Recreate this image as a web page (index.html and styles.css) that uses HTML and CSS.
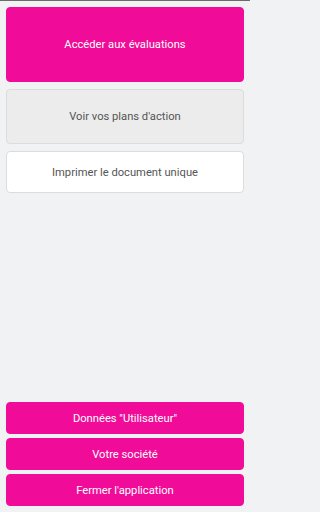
FILE: index.html
```html
<!DOCTYPE html>
<html lang="fr">
<head>
<meta charset="utf-8">
<meta name="viewport" content="width=250">
<link rel="stylesheet" href="styles.css">
</head>
<body>
<div class="app">
  <div class="top">
    <button class="btn btn-primary btn-large">Accéder aux évaluations</button>
    <button class="btn btn-gray btn-medium">Voir vos plans d'action</button>
    <button class="btn btn-white btn-small">Imprimer le document unique</button>
  </div>
  <div class="bottom">
    <button class="btn btn-primary btn-menu">Données "Utilisateur"</button>
    <button class="btn btn-primary btn-menu">Votre société</button>
    <button class="btn btn-primary btn-menu">Fermer l'application</button>
  </div>
</div>
</body>
</html>
```
FILE: styles.css
```css
html, body {
  margin: 0;
  padding: 0;
  height: 100%;
}
body {
  background: #f1f2f4;
  font-family: Roboto, "Noto Sans", sans-serif;
}
.app {
  box-sizing: border-box;
  width: 250px;
  height: 512px;
  border-top: 1px solid #6b6b6b;
  padding: 6px 6px 6px 6px;
  display: flex;
  flex-direction: column;
  justify-content: space-between;
}
.top, .bottom {
  display: flex;
  flex-direction: column;
}
.top { gap: 7px; }
.bottom { gap: 4px; }
.btn {
  box-sizing: border-box;
  width: 100%;
  border-radius: 4px;
  font-family: Roboto, "Noto Sans", sans-serif;
  font-size: 11.2px;
  padding: 0;
  margin: 0;
}
.btn-primary {
  background: #f00c98;
  color: #ffffff;
  border: 1px solid #f00c98;
}
.btn-gray {
  background: #ececec;
  color: #555555;
  border: 1px solid #dcdcdc;
}
.btn-white {
  background: #ffffff;
  color: #555555;
  border: 1px solid #dcdcdc;
}
.btn-large { height: 75px; }
.btn-medium { height: 55px; }
.btn-small { height: 42px; }
.btn-menu { height: 32px; }
```
